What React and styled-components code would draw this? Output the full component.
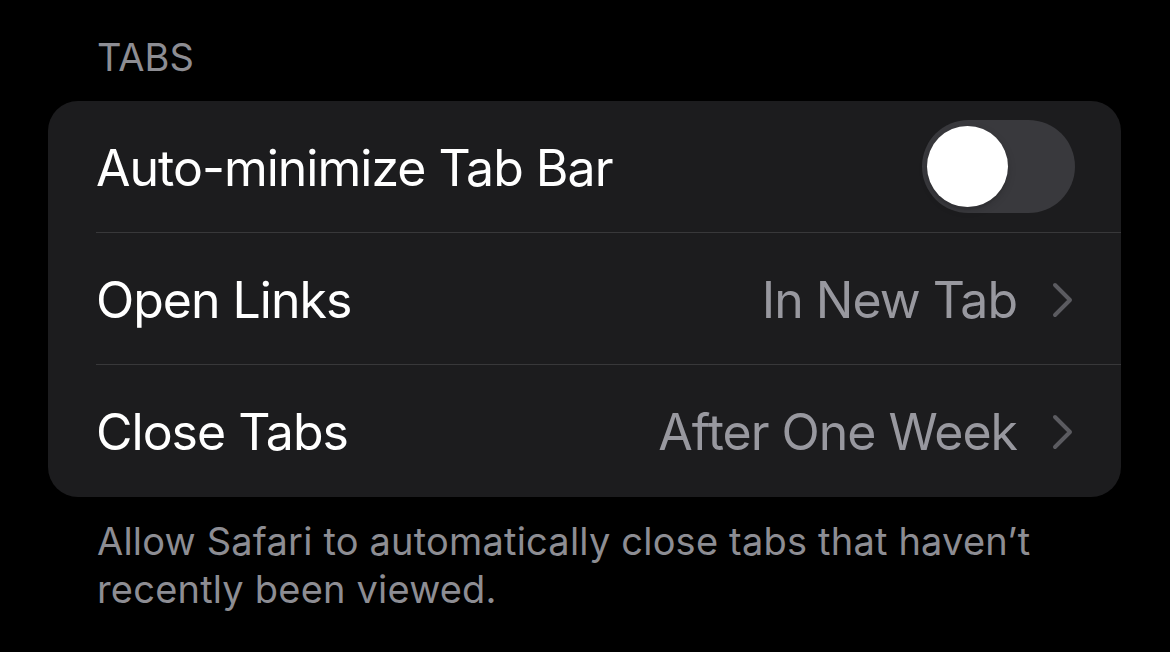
import React, { useState } from "react";
import styled, { createGlobalStyle } from "styled-components";

const Global = createGlobalStyle`
  html, body { margin: 0; padding: 0; background: #000; }
  body { font-family: Inter, "Noto Sans", "Liberation Sans", sans-serif; -webkit-font-smoothing: antialiased; }
`;

const Page = styled.div`
  width: 1170px;
  height: 652px;
  background: #000;
  padding: 33px 49px 0 48px;
  box-sizing: border-box;
  overflow: hidden;
`;

const SectionHeader = styled.div`
  padding-left: 49px;
  font-size: 38px;
  line-height: 48px;
  color: #8d8d93;
  letter-spacing: 0;
  margin-bottom: 20px;
`;

const Card = styled.div`
  background: #1c1c1e;
  border-radius: 30px;
  overflow: hidden;
`;

const Row = styled.div`
  padding-left: 48px;
`;

const RowInner = styled.div`
  height: ${(p) => (p.$last ? 132 : 131)}px;
  display: flex;
  align-items: center;
  justify-content: space-between;
  padding-right: 47px;
  border-bottom: ${(p) => (p.$last ? "none" : "1px solid #38383a")};
`;

const Label = styled.span`
  font-size: 50px;
  color: #fff;
  letter-spacing: -1px;
  margin-top: 2px;
`;

const Trailing = styled.div`
  display: flex;
  align-items: center;
  gap: 35px;
`;

const Value = styled.span`
  font-size: 50px;
  color: #98989f;
  letter-spacing: -1px;
  margin-top: 2px;
`;

const Chevron = styled.svg`
  width: 22px;
  height: 36px;
  display: block;
  margin-top: 2px;
`;

const Track = styled.button`
  width: 153px;
  height: 93px;
  border-radius: 47px;
  border: none;
  padding: 0;
  background: ${(p) => (p.$on ? "#30d158" : "#39393d")};
  position: relative;
  cursor: pointer;
  margin-right: -1px;
`;

const Knob = styled.span`
  position: absolute;
  top: 6px;
  left: ${(p) => (p.$on ? "66px" : "5px")};
  width: 81px;
  height: 81px;
  border-radius: 50%;
  background: #fff;
  box-shadow: 0 3px 8px rgba(0, 0, 0, 0.15), 0 3px 1px rgba(0, 0, 0, 0.06);
`;

const Footer = styled.div`
  padding: 20px 0 0 49px;
  font-size: 38px;
  line-height: 48px;
  color: #8d8d93;
  max-width: 960px;
  letter-spacing: 0.2px;
`;

function ChevronIcon() {
  return (
    <Chevron viewBox="0 0 22 36">
      <path d="M3 3 L18 18 L3 33" fill="none" stroke="#5b5b60" strokeWidth="4" strokeLinecap="round" strokeLinejoin="round" />
    </Chevron>
  );
}

export default function App() {
  const [on, setOn] = useState(false);
  return (
    <Page>
      <Global />
      <SectionHeader>TABS</SectionHeader>
      <Card>
        <Row>
          <RowInner>
            <Label>Auto-minimize Tab Bar</Label>
            <Track $on={on} onClick={() => setOn(!on)} aria-label="Auto-minimize Tab Bar">
              <Knob $on={on} />
            </Track>
          </RowInner>
        </Row>
        <Row>
          <RowInner>
            <Label>Open Links</Label>
            <Trailing>
              <Value>In New Tab</Value>
              <ChevronIcon />
            </Trailing>
          </RowInner>
        </Row>
        <Row>
          <RowInner $last>
            <Label>Close Tabs</Label>
            <Trailing>
              <Value>After One Week</Value>
              <ChevronIcon />
            </Trailing>
          </RowInner>
        </Row>
      </Card>
      <Footer>Allow Safari to automatically close tabs that haven’t recently been viewed.</Footer>
    </Page>
  );
}
